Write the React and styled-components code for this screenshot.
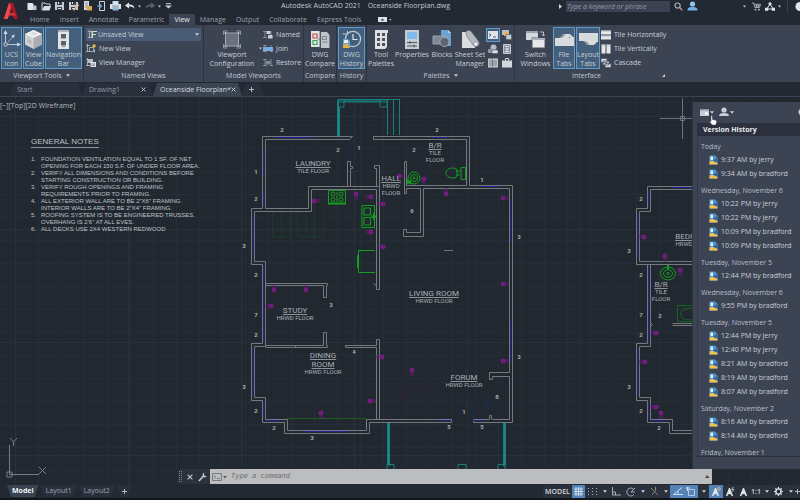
import React from "react";
import styled, { createGlobalStyle, css } from "styled-components";

const color = {
  frame: "#222932",
  ribbon: "#3c4454",
  divider: "#2d3441",
  canvas: "#212830",
  text: "#c9ced6",
  dim: "#9aa1ac",
  activeFill: "#435f7b",
  activeLine: "#5f9cc9",
};

const GlobalStyle = createGlobalStyle`
  * { box-sizing: border-box; }
  body { margin: 0; background: ${color.frame}; }
  button, input, select {
    font: inherit; color: inherit; background: none; border: 0; padding: 0; margin: 0;
    border-radius: 0; outline: none;
  }
  button { white-space: nowrap; }
  svg { display: block; flex: none; }
`;

const Shell = styled.div`
  height: 100vh;
  display: flex;
  flex-direction: column;
  overflow: hidden;
  font: 7px/10px "Open Sans", "Noto Sans", sans-serif;
  color: ${color.text};
  background: ${color.frame};
`;

/* ---------- header ---------- */
const Header = styled.header`
  display: grid;
  grid-template-columns: 25px minmax(0, 1fr);
  grid-template-rows: 14px 11px;
  flex: none;
`;
const LogoButton = styled.button`
  grid-row: 1 / 3;
  display: flex;
  padding: 2px 0 0 3px;
`;
const TitleBar = styled.div`
  display: flex;
  align-items: center;
  padding-bottom: 2px;
  min-width: 0;
`;
const QuickAccess = styled.div`
  display: flex;
  align-items: center;
  gap: 4px;
  padding-left: 2px;
  width: 147px;
  flex: none;
`;
const IconButton = styled.button`
  display: flex;
  align-items: center;
  justify-content: center;
  gap: ${(p) => p.$gap || 0}px;
  flex: none;
  color: #d5d9df;
`;
const Title = styled.div`
  flex: 1;
  display: flex;
  justify-content: center;
  gap: 7px;
  white-space: nowrap;
  color: #c3c8d0;
  line-height: 12px;
`;
const SearchArea = styled.div`
  display: flex;
  align-items: center;
  gap: 4px;
  width: 241px;
  flex: none;
`;
const SearchInput = styled.input`
  width: 104px;
  height: 11px;
  padding: 0 1px;
  background: #3b4252;
  font-style: italic;
  &::placeholder { color: #959cab; opacity: 1; }
`;
const Spacer = styled.span`
  flex: 1;
`;

const Menu = styled.nav`
  display: flex;
  color: ${color.dim};
`;
const MenuTab = styled.button`
  padding: 0 5px;
  line-height: 11px;
  ${(p) =>
    p.$active &&
    css`
      background: ${color.ribbon};
      color: #e3e6ea;
    `}
`;

/* ---------- ribbon ---------- */
const Ribbon = styled.section`
  display: flex;
  flex: none;
  height: 57px;
  background: ${color.ribbon};
`;
const Group = styled.section`
  display: flex;
  flex-direction: column;
  flex: none;
  width: ${(p) => p.$w}px;
  border-right: 1px solid ${(p) => (p.$last ? "transparent" : color.divider)};
`;
const GroupBody = styled.div`
  display: flex;
  gap: 1px;
  height: 44px;
  padding: ${(p) => p.$pad || "2px 1px 0"};
`;
const GroupLabel = styled.div`
  display: flex;
  align-items: center;
  justify-content: center;
  gap: 4px;
  height: 13px;
  line-height: 13px;
  white-space: nowrap;
  color: #c0c5ce;
`;
const LauncherLabel = styled(GroupLabel)`
  padding-right: 9px;
  text-align: center;
  span { flex: 1; }
`;
const BigButton = styled.button`
  width: ${(p) => p.$w}px;
  height: 42px;
  flex: none;
  display: flex;
  flex-direction: column;
  align-items: center;
  justify-content: flex-end;
  line-height: 9px;
  border: 1px solid transparent;
  ${(p) =>
    p.$active &&
    css`
      background: ${color.activeFill};
      border-color: ${color.activeLine};
    `}
`;
const BigIcon = styled.span`
  height: 21px;
  display: flex;
  align-items: center;
`;
const Stack = styled.div`
  display: flex;
  flex-direction: column;
  gap: 1px;
  padding-top: 1px;
`;
const SmallButton = styled.button`
  display: flex;
  align-items: center;
  gap: 3px;
  height: 13px;
  text-align: left;
`;
const ViewPicker = styled.label`
  display: flex;
  align-items: center;
  height: 13px;
  width: 115px;
  padding: 0 2px;
  background: #4a5b76;
`;
const ViewSelect = styled.select`
  flex: 1;
  appearance: none;
`;
const PaletteGrid = styled.div`
  display: grid;
  grid-template-columns: 14px 13px;
  grid-auto-rows: 14px;
  padding-top: 1px;
`;
const PaletteButton = styled(IconButton)`
  border: 1px solid ${(p) => (p.$active ? color.activeLine : "transparent")};
  background: ${(p) => (p.$active ? color.activeFill : "none")};
`;

/* ---------- file tabs ---------- */
const FileTabs = styled.div`
  display: flex;
  align-items: flex-end;
  height: 15px;
  flex: none;
  padding-left: 10px;
  border-bottom: 1px solid #3a4352;
`;
const FileTab = styled.div`
  display: flex;
  align-items: center;
  justify-content: space-between;
  width: ${(p) => p.$w}px;
  height: 13px;
  padding: 0 7px;
  white-space: nowrap;
  clip-path: polygon(4px 0, calc(100% - 4px) 0, 100% 100%, 0 100%);
  background: ${(p) => (p.$active ? "#3a4352" : "#29303b")};
  color: ${(p) => (p.$active ? "#d5d9df" : "#9198a3")};
`;

/* ---------- workspace ---------- */
const Workspace = styled.main`
  flex: 1;
  min-height: 0;
  display: grid;
  grid-template-columns: minmax(0, 1fr) 108px;
  grid-template-rows: minmax(0, 1fr) 15px 1px;
  background: ${color.canvas};
`;
const DrawingArea = styled.div`
  grid-area: 1 / 1 / -1 / -1;
  position: relative;
  overflow: hidden;
`;
const Plan = styled.svg`
  position: absolute;
  inset: 0;
  width: 100%;
  height: 100%;
  text { font-family: Roboto, sans-serif; text-anchor: middle; fill: #a9aeb5; }
`;
const ViewLabel = styled.div`
  position: relative;
  padding-top: 3px;
  line-height: 11px;
  color: #b5bac1;
`;
const Notes = styled.section`
  position: relative;
  padding-left: 31px;
  font-family: "Liberation Sans", Arial, sans-serif;
  font-size: 6px;
  line-height: 7px;
  color: #bfc3c9;
`;
const NotesTitle = styled.h2`
  width: fit-content;
  margin: 26px 0 8px;
  font-size: 8px;
  line-height: 10px;
  font-weight: 400;
  border-bottom: 1px solid #8d9298;
`;
const NotesList = styled.ol`
  margin: 0;
  padding: 0;
  list-style: none;
  white-space: pre;
  counter-reset: note;
  li {
    display: grid;
    grid-template-columns: 10px auto;
    counter-increment: note;
  }
  li::before { content: counter(note) "."; }
`;

/* ---------- version history ---------- */
const Panel = styled.aside`
  grid-area: 1 / 2;
  position: relative;
  z-index: 1;
  display: flex;
  flex-direction: column;
  margin-top: 5px;
  background: ${color.ribbon};
  border-left: 1px solid #2c333f;
  overflow: hidden;
`;
const PanelTools = styled.div`
  display: flex;
  align-items: center;
  gap: 5px;
  height: 21px;
  padding: 0 0 1px 7px;
`;
const PanelTitle = styled.h2`
  margin: 0 0 0 4px;
  padding-left: 6px;
  font-size: 7px;
  line-height: 13px;
  font-weight: 700;
  color: #e8eaee;
  background: #2c313d;
`;
const VersionList = styled.div`
  flex: 1;
  min-height: 0;
  overflow: hidden;
  margin: 0 0 12px 4px;
  padding: 4px 0 0 3px;
  border-left: 1px solid #31384a;
  border-bottom: 1px solid #2a303d;
`;
const VersionGroup = styled.section`
  margin-bottom: 3px;
`;
const VersionDate = styled.h3`
  margin: 0;
  font-size: 7px;
  font-weight: 400;
  line-height: 13px;
  color: #b9bfca;
  white-space: nowrap;
`;
const VersionItem = styled.button`
  display: flex;
  align-items: center;
  gap: 3px;
  height: 14px;
  padding-left: 8px;
`;
const Pointer = styled.svg`
  position: absolute;
  left: 16px;
  top: 13px;
`;

/* ---------- command line ---------- */
const CommandBar = styled.form`
  grid-area: 2 / 1 / 3 / -1;
  z-index: 2;
  display: flex;
  margin: 0 88px 0 178px;
  background: #2b323d;
`;
const CommandTools = styled.div`
  display: flex;
  align-items: center;
  justify-content: space-between;
  width: 32px;
  padding: 0 3px 0 1px;
`;
const CommandField = styled.label`
  flex: 1;
  display: flex;
  align-items: center;
  gap: 4px;
  padding: 0 2px;
  background: #bcbdbe;
  color: #555;
`;
const CommandInput = styled.input`
  flex: 1;
  min-width: 0;
  font: italic 7px/11px "DejaVu Sans Mono", "Liberation Mono", monospace;
  &::placeholder { color: #6b6c6e; opacity: 1; }
`;

/* ---------- status bar ---------- */
const StatusBar = styled.footer`
  display: flex;
  flex: none;
  height: 15px;
  border-bottom: 2px solid #12161c;
`;
const LayoutTabs = styled.div`
  display: flex;
  flex: 1;
  padding-left: 7px;
  gap: 2px;
`;
const LayoutTab = styled.button`
  height: 12px;
  padding: 0 5px;
  background: ${(p) => (p.$active ? "#3a4352" : "#29303b")};
  color: ${(p) => (p.$active ? "#f0f2f4" : "#9da4af")};
  font-weight: ${(p) => (p.$active ? 700 : 400)};
  clip-path: polygon(0 0, 100% 0, calc(100% - 4px) 100%, 4px 100%);
`;
const StatusTools = styled.div`
  display: flex;
  background: #2a313c;
`;
const StatusButton = styled.button`
  display: flex;
  align-items: center;
  justify-content: center;
  width: ${(p) => p.$w}px;
  height: 13px;
  font-weight: 600;
  color: #d3d7dd;
  background: ${(p) => (p.$on ? "#5583b8" : "none")};
`;

/* ---------- icons ---------- */
const Svg = ({ w, h, children, vb }) => (
  <svg width={w} height={h} viewBox={vb || `0 0 ${w} ${h}`} fill="none" aria-hidden="true">
    {children}
  </svg>
);
const Caret = ({ w = 5 }) => (
  <Svg w={w} h={3} vb="0 0 6 3.6">
    <path d="M0 0h6L3 3.6z" fill="#ccd1d8" />
  </Svg>
);
const Cross = ({ s = 5 }) => (
  <Svg w={s} h={s} vb="0 0 5 5">
    <path d="M.5.5l4 4M4.5.5l-4 4" stroke="#c5cad2" strokeWidth=".9" />
  </Svg>
);
const Plus = () => (
  <Svg w={5} h={5}>
    <path d="M2.5 0v5M0 2.5h5" stroke="#b4bac4" />
  </Svg>
);
const Logo = () => (
  <Svg w={16} h={18}>
    <path d="M6 1h4l5 16h-3.8l-1-3.8H6.5L4.6 17H.8z" fill="#c4202e" />
    <path d="M6 1L.8 17h3.8L8 5z" fill="#ef4a52" />
    <path d="M10 1l5 16h-3.8L7.5 3.5z" fill="#a81623" />
    <path d="M8.2 6.2l1.5 4.6H6.8z" fill="#222932" />
    <path d="M5.9 11.2h6l.8 2.2H5.2z" fill="#d73540" />
  </Svg>
);
const NewFile = () => (
  <Svg w={10} h={9}>
    <path d="M.5 1h5l1 1.5V8h-6z" fill="#e4e6e9" />
    <path d="M6.5 3l3 1v4h-4z" fill="#c2c6cc" />
  </Svg>
);
const OpenFile = () => (
  <Svg w={10} h={9}>
    <path d="M1 8V1h3l1 1h4v2" stroke="#cfd3d9" />
    <path d="M3 4h7L8.500 8.500H1z" fill="#d9dce1" />
  </Svg>
);
const SaveFile = ({ pen }) => (
  <Svg w={10} h={10}>
    <path d="M0 1h9v8H0z" fill="#c6cad0" />
    <path d="M2 1h5v3H2zM2 6h5v3H2z" fill="#39414e" />
    <path d="M3 7.500h3M3.500 1v2" stroke="#d8dbe0" />
    {pen && <path d="M4.500 9.200l5-5.400" stroke="#e5be8a" strokeWidth="1.600" />}
  </Svg>
);
const OpenWeb = () => (
  <Svg w={10} h={10}>
    <path d="M1 0h5v9H1z" fill="#d8dbdf" />
    <path d="M2 2h3M2 4h3M2 6h2" stroke="#69717e" strokeWidth=".7" />
    <path d="M3.500 5H9v4.500H3.500z" fill="#d9a655" />
  </Svg>
);
const SaveWeb = () => (
  <Svg w={9} h={10}>
    <path d="M2.500.500h5v9h-5z" stroke="#cdd1d7" />
    <path d="M0 5h4M2.600 3l2 2-2 2" stroke="#5aa5dc" strokeWidth="1.200" />
  </Svg>
);
const Print = () => (
  <Svg w={11} h={10}>
    <path d="M2.500 0h6v3h-6z" fill="#cfe2f2" />
    <path d="M0 3h11v5H0z" fill="#dfe2e6" />
    <path d="M2.500 6h6v3.500h-6z" fill="#8db8da" />
    <path d="M2 5h7" stroke="#606975" strokeWidth=".7" />
  </Svg>
);
const Undo = ({ dim }) => (
  <Svg w={10} h={8}>
    <g transform={dim ? "matrix(-1 0 0 1 10 0)" : undefined}>
      <path d="M0 3.500L4 .500v2c3.400 0 5.400 1.200 5.600 4.600C8.300 5.200 6.500 4.600 4 4.600v2z" fill={dim ? "#5a6371" : "#e0e3e7"} />
    </g>
  </Svg>
);
const MoreTools = () => (
  <Svg w={7} h={6}>
    <path d="M1 .7h5" stroke="#ccd1d8" />
    <path d="M0 2.400h7L3.500 5.500z" fill="#ccd1d8" />
  </Svg>
);
const SearchIcon = () => (
  <Svg w={9} h={9}>
    <circle cx="3.600" cy="3.600" r="2.600" stroke="#a9afb9" strokeWidth="1.200" />
    <path d="M5.600 5.600l2.700 2.700" stroke="#c4927a" strokeWidth="1.400" />
  </Svg>
);
const UserIcon = () => (
  <Svg w={11} h={10}>
    <circle cx="5.500" cy="3" r="2.600" fill="#8cc4ee" />
    <path d="M.5 9.500c0-3 2-3.500 5-3.500s5 .5 5 3.500z" fill="#6fb0e2" />
  </Svg>
);
const Cart = () => (
  <Svg w={9} h={9}>
    <path d="M0 1h1.700l1.200 4.600h4.600l1-3.300H2.200M3.200 4h5M4.600 2.500v3M6.300 2.500v3" stroke="#b9bfc8" strokeWidth=".8" />
    <circle cx="3.500" cy="7.700" r=".9" fill="#b9bfc8" />
    <circle cx="7" cy="7.700" r=".9" fill="#b9bfc8" />
  </Svg>
);
const Share = () => (
  <Svg w={10} h={9}>
    <path d="M5 2L1.800 7M5 2l3.200 5M3 7h4" stroke="#e0e3e7" strokeWidth="1" />
    <circle cx="5" cy="1.800" r="1.600" fill="#e0e3e7" />
    <path d="M0 5.800h3.200v3H0zM6.800 5.800H10v3H6.800z" fill="#e0e3e7" />
  </Svg>
);
const Ucs = () => (
  <Svg w={19} h={19}>
    <path d="M3.500 2v12.500H16" stroke="#b9c3ce" />
    <path d="M4 14L11 7" stroke="#b9c3ce" strokeDasharray="2 1" />
    <path d="M1.500 4l2-4 2 4zM15 12.500l4 2-4 2zM9 6l4-1.500L11.500 8z" fill="#d5dbe2" />
    <path d="M2 13h3v3H2z" fill="#435f7b" stroke="#c5ccd5" strokeWidth=".8" />
  </Svg>
);
const Cube = () => (
  <Svg w={17} h={19}>
    <path d="M8.500 0L17 4v10.500L8.500 19 0 14.500V4z" fill="#cfd1d3" />
    <path d="M8.500 0L17 4 8.500 8 0 4z" fill="#efefef" />
    <path d="M8.500 8L17 4v10.500L8.500 19z" fill="#a9acb0" />
    <path d="M2.500 8.500l4 2v3.500l-4-2z" fill="#b7babd" />
    <path d="M4.500 3.800l4-2 4 2-4 2z" fill="#d9dadb" />
  </Svg>
);
const NavBarIcon = () => (
  <Svg w={11} h={19}>
    <path d="M0 0h11v19H0z" fill="#e2e3e4" />
    <path d="M0 0h11v2H0z" fill="#aeb3b9" />
    <path d="M3 4h5v4.500H3zM3 11h5v4.500H3z" fill="#59616c" />
    <path d="M4 16.700h3" stroke="#8b9199" />
  </Svg>
);
const ViewGlyph = ({ kind }) => (
  <Svg w={10} h={9}>
    <path d="M1.500 0v8M0 1.500h4M0 7.500h4" stroke="#a9b1bd" strokeWidth=".9" />
    {kind === "pick" && <path d="M3.500 8V1H9v1H5v2h3v1H5v3z" fill="#e3d9b7" />}
    {kind === "new" && (
      <>
        <path d="M3.500 3.500h4v4h-4z" stroke="#aab2bd" strokeWidth=".9" />
        <circle cx="8" cy="2" r="1.700" fill="#e7b94f" />
        <path d="M8.500 5.500v3" stroke="#b4bbc6" />
      </>
    )}
    {kind === "manage" && (
      <>
        <path d="M2 1h5v4H2z" fill="#b9bfc8" />
        <path d="M4.500 4H10v5H4.500z" fill="#dfe2e6" />
        <path d="M5.500 6h3.500M5.500 7.500h3.500" stroke="#626b79" strokeWidth=".7" />
      </>
    )}
  </Svg>
);
const Viewport = () => (
  <Svg w={18} h={19}>
    <path d="M2.500 3h13v13h-13z" fill="#6a717d" stroke="#a3a9b2" />
    <path d="M.5 5V1h4M13.500 1h4v4M17.500 14v4h-4M4.500 18h-4v-4" stroke="#9097a2" />
    <path d="M1.500 2h2v2h-2zM14.500 2h2v2h-2zM1.500 15h2v2h-2zM14.500 15h2v2h-2z" fill="#aeb4bd" />
  </Svg>
);
const PortGlyph = ({ kind }) => (
  <Svg w={10} h={9}>
    <path d="M2 1v7M0 1.500h4M0 7.500h4M8 1v7M7 7.500h3" stroke="#9199a6" strokeWidth=".8" />
    {kind === 0 && <path d="M3.500 1h4v3h-4zM5 5h4.500v3.500H5z" fill="#ced2d8" />}
    {kind === 1 && <path d="M0 3h10v4H0z" fill="#77addb" />}
    {kind === 2 && <path d="M3 3h4.500v3.500H3z" fill="#818a98" />}
  </Svg>
);
const Compare = () => (
  <Svg w={20} h={18}>
    <path d="M1 0h9v16H1z" fill="#e3e4e5" />
    <path d="M11 1h6l2.500 3v13H11z" fill="#c0c3c7" />
    <path d="M3 3h4v4H3z" stroke="#d3484d" strokeWidth="1.200" />
    <path d="M3 9.500h4v4H3z" stroke="#3da65a" strokeWidth="1.200" />
    <path d="M10 0v17.500" stroke="#5f6672" />
    <path d="M12.500 5.500h4v3h-4zM12.500 11h5" stroke="#7e858f" />
    <path d="M7.500 8h5" stroke="#7e858f" />
  </Svg>
);
const History = () => (
  <Svg w={20} h={19}>
    <circle cx="11" cy="9" r="7.600" stroke="#bfcbd7" strokeWidth="1.300" />
    <path d="M11 4v5.500h4.500" stroke="#dfe5eb" strokeWidth="1.200" />
    <path d="M.5 4h5v-3" stroke="#bfcbd7" />
    <path d="M1 9h5l2 2v7H1z" fill="#6ba4d4" />
    <path d="M2 10h4v3H2z" fill="#e8eaec" />
    <path d="M1 15l4-1.500L8 18H1z" fill="#e5b23c" />
  </Svg>
);
const ToolPal = () => (
  <Svg w={15} h={19}>
    <path d="M1 0h13v3h-1v14l-2 2H1z" fill="#dfe0e1" />
    <path d="M3 3h3v3H3zM8 3h3v3H8zM3 8h3v3H3zM8 8h3v3H8zM3 13h3v3H3zM8 13h3v3H8z" fill="#4c535f" />
  </Svg>
);
const Props = () => (
  <Svg w={14} h={19}>
    <path d="M0 0h14v19H0z" fill="#c8cbcf" />
    <path d="M2 2h10v7H2z" fill="#7fbceb" />
    <path d="M2 12.500h10M2 16h10M5 11v3M9 14.500v3" stroke="#505865" />
  </Svg>
);
const Blocks = () => (
  <Svg w={20} h={19}>
    <path d="M9 0h7l3 3v13H9z" fill="#6aa3d2" />
    <path d="M16 0v3h3z" fill="#b8d8f0" />
    <path d="M1 6h11v8H1z" fill="#808792" stroke="#9da3ad" />
    <circle cx="12.500" cy="12" r="4.600" fill="#5d6572" stroke="#a1a7b1" />
  </Svg>
);
const SheetSet = () => (
  <Svg w={19} h={19}>
    <path d="M1 2h4l9 12v4H1z" fill="#d9dbdd" />
    <path d="M5 2c1-2 4-2 5.500 0l7.500 10c1 4-3 6-5.500 3.500L5.500 6z" fill="#b4b8bd" stroke="#737a85" strokeWidth=".7" />
    <circle cx="14.800" cy="14" r="2.300" fill="#eef0f1" stroke="#777e88" strokeWidth=".7" />
  </Svg>
);
const Pal = ({ kind }) => (
  <Svg w={10} h={10}>
    {kind === 0 && (
      <>
        <path d="M0 1h10v8H0z" fill="#dfe3e7" />
        <path d="M1 3.500l2 1.500-2 1.500M5 7h3" stroke="#38414d" strokeWidth=".8" />
      </>
    )}
    {kind === 1 && (
      <>
        <path d="M0 0h7v5H0z" fill="#b9bfc8" />
        <path d="M2 2h5v4H2z" fill="#e0b35c" />
        <path d="M4 4.500h5.500v5H4z" fill="#c7cbd2" stroke="#545d6b" strokeWidth=".6" />
      </>
    )}
    {kind === 2 && (
      <>
        <circle cx="5.500" cy="3.500" r="3" fill="#b5bac3" />
        <path d="M0 5h6v4H0z" fill="#8d95a1" />
        <path d="M4 6h6v3.500H4z" fill="#dcdfe3" stroke="#525b69" strokeWidth=".6" />
      </>
    )}
    {kind === 3 && (
      <>
        <path d="M1.500.5h7v9h-7z" fill="#8c939e" stroke="#c6cad1" />
        <path d="M3 2.500h4M3 5h4M3 7.500h4M5 4v4.500" stroke="#dde0e4" strokeWidth=".9" />
      </>
    )}
    {kind === 4 && (
      <>
        <path d="M0 .5h10v9H0z" fill="#c4c8ce" />
        <path d="M1 3h8M1 5h8M1 7h8M4.500 1v8" stroke="#646c79" strokeWidth=".8" />
      </>
    )}
    {kind === 5 && (
      <>
        <path d="M0 2.500h10v7H0z" fill="#d3d6da" />
        <path d="M3.500 2.500v-2h3v2" stroke="#d3d6da" />
      </>
    )}
  </Svg>
);
const Switch = () => (
  <Svg w={20} h={19}>
    <path d="M0 1h12v9H0z" fill="#d5d8dc" />
    <path d="M0 1h12v2H0z" fill="#9ca2ac" />
    <path d="M6 8h13v10H6z" fill="#e7e8e9" stroke="#4a5260" />
    <path d="M6 8h13v2H6z" fill="#aab0b8" />
    <path d="M14 2h3.500v4M16 4.500l1.500 1.500L19 4.500" stroke="#bcc1c9" />
  </Svg>
);
const FileTabIcon = ({ flip }) => (
  <Svg w={19} h={13}>
    <g transform={flip ? "matrix(1 0 0 -1 0 13)" : undefined}>
      <path d="M0 5h5l3-4h7l3 3h1v9H0z" fill="#d8dadc" />
      <path d="M3 5c3 0 4-4 7-4-1 3-3 4-7 4z" fill="#7f8791" />
    </g>
    {!flip && <circle cx="14.500" cy="4.500" r=".8" fill="#7f8791" />}
  </Svg>
);
const TileIcon = ({ kind }) => (
  <Svg w={10} h={10}>
    {kind === 0 && <path d="M0 .5h10v4H0zM0 5.500h10v4H0z" fill="#e6e8ea" />}
    {kind === 1 && <path d="M.5.5h4v9h-4zM5.500.5h4v9h-4z" fill="#e6e8ea" />}
    {kind === 2 && (
      <g fill="#dadde1" stroke="#444d5b" strokeWidth=".7">
        <path d="M0 .5h6v4H0zM2 3h6v4H2zM4 5.500h6v4H4z" />
      </g>
    )}
    {kind < 2 && <path d={kind ? "M.5 1h4M5.500 1h4" : "M0 1h10M0 6h10"} stroke="#a3aab5" strokeWidth=".8" />}
  </Svg>
);
const VersionIcon = () => (
  <Svg w={9} h={10}>
    <path d="M.5.5H6l2.500 2.500v6.500h-8z" fill="#4f93cf" />
    <path d="M1.500 1.500H4V5H1.500z" fill="#e6edf2" />
    <path d="M4 5.500L8 3v4H4z" fill="#2d68a6" />
    <path d="M.5 6.500l3-.8 5 2.300v1.500h-8z" fill="#f0c14c" />
  </Svg>
);
const Wrench = () => (
  <Svg w={9} h={10}>
    <path d="M.9 8.900l4.600-4.800" stroke="#c9ced6" strokeWidth="1.500" />
    <path d="M6.300.8C4.600 1.300 4.200 3 4.800 4.300s2.500 1.700 3.900-.3L7 4 5.900 2.900z" fill="#c9ced6" />
  </Svg>
);
const Gear = () => (
  <Svg w={9} h={9}>
    <circle cx="4.500" cy="4.500" r="2.600" stroke="#e1e4e8" strokeWidth="1.400" />
    <path d="M4.500 0v2M4.500 7v2M0 4.500h2M7 4.500h2M1.300 1.300l1.400 1.400M6.300 6.300l1.400 1.400M7.700 1.300L6.300 2.700M2.700 6.300L1.300 7.700" stroke="#e1e4e8" strokeWidth="1.200" />
  </Svg>
);
const ScaleMark = ({ badge }) => (
  <Svg w={10} h={10}>
    <path d="M4 1L.8 9h1.400L4.500 6l2.300 3h1.400L5 1z" fill="#dfe4ea" />
    <path d="M4.500 2v5" stroke="#dfe4ea" strokeWidth="1.300" />
    {badge === "eye" && <circle cx="8" cy="2" r="1.400" stroke="#e8c884" strokeWidth=".8" />}
    {badge === "bolt" && <path d="M8.300 0L6.800 2.400h2L7.500 4.500" stroke="#e0e3e7" strokeWidth=".8" />}
  </Svg>
);

/* ---------- floor plan ---------- */
const WALLS = [
  "M349 136H262V208H251V264H262V343H251V400H262V422H284V433H369V422H451V419H366V430H287V419H265V397H254V346H265V261H254V211H311V189H376V289H379V186H308V208H265V139H349L352 136Z",
  "M489 419H473V422H512V185H469V136H373V139H466V185H406V161H404V193H406V188H420V232H406V229H403V236H423V188H509V372H489V379H492V376H509V419H492",
  "M347 186V161H350V166H352V168H350V186M379 186V165H374V168H376V186",
  "M265 283H327V285H326V297H323V285H265M265 345H323V332H326V345H327V347H265M345 345H376V339H379V419M345 347H376V419M345 345V347M295 345V347M373 283L376 285",
  "M489 419V415H491V419",
];
const EAST_WALLS = [
  "M692 186H647V208H636V264H692M692 189H650V211H639V261H692",
  "M647 264V343H636V400H647V422H669V433H692M650 264V346H639V397H650V419H672V430H692M650 322L652 324L650 326M672 323H692M672 325H692",
];
const WINDOWS =
  "M275 137.500H312M263.500 150V176M263.500 190V206M252.500 216V255M263.500 265V342M252.500 348V396M263.500 402V418M264 420.500H280M305 431.500H349M432 137.500H447M482 186.500H499M510.500 199V242M510.500 320V362M440 420.500H451M473 420.500H484M672 187.500H692M648.500 190V206M637.500 214V258M648.500 266V342M637.500 348V396M648.500 402V418M650 420.500H665";
const TEAL =
  "M338 99.500H400M338 102H386M337.500 100V136M339.500 107V136M387.500 100V135M393.500 100V135M399.500 100V135M338 100H344V107H338ZM380 100H387V107H380ZM387.500 422V466M389.500 422V466M503.500 422V466M505.500 422V466M387 464.500H394V471H387ZM458 464.500H466V471H458ZM498 464.500H505V471H498Z";
const OUTLETS = [
  [314, 201, 0], [356, 194, 90], [371, 197, 180], [371, 232, 180], [383, 204, 180], [383, 247, 180],
  [399, 176, 0], [424, 179, 90], [446, 194, 270], [503, 198, 0], [274, 290, 270], [306, 290, 270],
  [271, 306, 180], [382, 357, 180], [370, 401, 0], [321, 413, 90], [412, 370, 90], [503, 284, 0],
  [503, 361, 0], [644, 237, 180], [665, 256, 90], [680, 270, 90], [656, 333, 180], [645, 362, 180],
  [656, 407, 180], [661, 413, 90],
];
const MARKS = [
  [282, 130, 2], [256, 172, 1], [256, 199, 2], [244, 246, 3], [256, 275, 2], [256, 315, 7], [256, 335, 2],
  [338, 150, 2], [359, 148, 1], [437, 130, 2], [414, 150, 2], [412, 211, 6], [482, 180, 1], [519, 237, 3],
  [331, 305, 3], [354, 352, 4], [244, 387, 3], [256, 411, 2], [274, 428, 2], [312, 438, 3], [519, 357, 3],
  [497, 397, 8], [464, 412, 1], [449, 427, 5], [482, 427, 5], [641, 199, 2], [629, 251, 3], [641, 275, 2],
  [641, 315, 7], [660, 316, 2], [641, 335, 2], [629, 387, 3], [641, 411, 2], [659, 428, 2],
];
const ROOMS = [
  [313, 166, ["LAUNDRY"], ["TILE FLOOR"]],
  [391, 181, ["HALL"], ["HRWD", "FLOOR"]],
  [435, 148, ["B/R"], ["TILE", "FLOOR"]],
  [434, 296, ["LIVING ROOM"], ["HRWD FLOOR"]],
  [295, 313, ["STUDY"], ["HRWD FLOOR"]],
  [323, 358, ["DINING", "ROOM"], ["HRWD FLOOR"]],
  [464, 380, ["FORUM"], ["HRWD FLOOR"]],
  [661, 287, ["B/R"], ["TILE", "FLOOR"]],
  [694, 239, ["BEDROOM"], ["HRWD FLOOR"]],
];

const Outlet = ({ at: [x, y, r] }) => (
  <g transform={`translate(${x} ${y}) rotate(${r})`}>
    <circle r="2" fill="#6d1a78" stroke="#842090" strokeWidth=".8" />
    <path d="M2 -1H6M2 1H6" stroke="#6d1c78" strokeWidth=".8" />
  </g>
);
const Room = ({ x, y, name, floor }) => (
  <>
    {name.map((line, i) => (
      <text key={line} x={x} y={y + i * 9} fontSize="8" textDecoration="underline">{line}</text>
    ))}
    {floor.map((line, i) => (
      <text key={line} x={x} y={y + name.length * 9 - 2 + i * 7} fontSize="6">{line}</text>
    ))}
  </>
);

function FloorPlan() {
  return (
    <Plan role="img" aria-label="Oceanside floor plan">
      <defs>
        <pattern id="fine" width="23" height="23" patternUnits="userSpaceOnUse" x="15" y="5">
          <path d="M.5 0V23M0 .5H23" stroke="#252d36" />
        </pattern>
        <pattern id="coarse" width="113" height="113" patternUnits="userSpaceOnUse" x="15" y="19">
          <path d="M.5 0V113M0 .5H113" stroke="#29323c" />
        </pattern>
      </defs>
      <rect width="100%" height="100%" fill="url(#fine)" />
      <rect width="100%" height="100%" fill="url(#coarse)" />
      <g transform="translate(0 -97)" fill="none">
        <path d={TEAL} stroke="#197f7c" />
        <path d="M338.500 102V136M388.500 423V465M504.500 423V465M344 101H380" stroke="#1c8c87" />
        <path d="M272.500 211V237H290.500V211M297.500 211V237H323.500V211M306.500 211V237M314.500 211V237M281.500 211V237" stroke="#1b3c25" />
        <path d="M287 418.500H366" stroke="#1d5a22" />
        <path d="M403 396L412 384H436M401 400V376H418V396H401M398 388H440" stroke="#371f47" strokeDasharray="3 2" />
        <path d="M350 140V161M472 402V416M485 414V398L489 410" stroke="#1b2f52" />
        <path d="M352 301Q335 320 326 332M420 210Q410 218 404 228" stroke="#22303c" />
        {[...WALLS, ...EAST_WALLS].map((d) => (
          <path key={d} d={d} stroke="#74797f" transform="translate(.5 .5)" />
        ))}
        <path d={WINDOWS} stroke="#222296" />
        <g stroke="#12a01c">
          <path d="M328.500 190.500H345.500V203.500H328.500Z" />
          <path d="M328 203.500H346" strokeWidth="2" />
          <circle cx="333" cy="194" r="2" />
          <circle cx="341" cy="194" r="2" />
          <circle cx="333" cy="199.500" r="2" />
          <circle cx="341" cy="199.500" r="2" />
          <path d="M337 192V202" />
          <path d="M362 205.500H374.500V227.500H362ZM364 208H370.500V215H364ZM364 217.500H370.500V225H364Z" />
          <path d="M371 216.500H376M374 213V220" strokeWidth="2" />
          <path d="M375 250.500H358.500V272.500H375M357.500 255V268" />
          <circle cx="414" cy="178" r="6" />
          <circle cx="414" cy="178" r="3.500" />
          <circle cx="414" cy="178" r="1" />
          <path d="M407 180L411 184M407 183L411 181" strokeWidth="2" />
          <path d="M456 168.500C450 167 446 169.500 446 173S450 179 456 177.500Q459 173 456 168.500ZM456 171H460M456 175H460M461 167.500H465.500V179.500H461Z" />
          <ellipse cx="668" cy="273.500" rx="7.500" ry="6.500" />
          <ellipse cx="668" cy="273.500" rx="4.500" ry="3.800" />
          <circle cx="668" cy="273.500" r="1" />
          <path d="M668 265V269" strokeWidth="2" />
          <path d="M692 305.500H677.500V321.500H692M692 308Q681 308 680.500 314T692 320" stroke="#176322" />
        </g>
        {OUTLETS.map((at) => (
          <Outlet key={at.join()} at={at} />
        ))}
        <path d="M444 250.500H453" stroke="#6f757c" />
        <path d="M660 118.500H704M682.500 98V139M680.500 116.500H684.500V120.500H680.500Z" stroke="#6e747b" />
        <path d="M9.500 445V474.500H39M7 472H12V477H7ZM10 438L13.500 442L17 438M13.500 442V446M39 467L46 474M46 467L39 474" stroke="#777d84" />
        {ROOMS.map(([x, y, name, floor]) => (
          <Room key={`${x}-${y}`} x={x} y={y} name={name} floor={floor} />
        ))}
        <g fontSize="6" fontWeight="700">
          {MARKS.map(([x, y, n]) => (
            <text key={`${x}-${y}`} x={x} y={y + 2}>{n}</text>
          ))}
        </g>
      </g>
    </Plan>
  );
}

const NOTES = [
  "FOUNDATION VENTILATION EQUAL TO 1 SF. OF NET\nOPENING FOR EACH 150 S.F. OF UNDER FLOOR AREA.",
  "VERIFY ALL DIMENSIONS AND CONDITIONS BEFORE\nSTARTING CONSTRUCTION OR BUILDING.",
  "VERIFY ROUGH OPENINGS AND FRAMING\nREQUIREMENTS PRIOR TO FRAMING.",
  "ALL EXTERIOR WALL ARE TO BE 2\"X6\" FRAMING.\nINTERIOR WALLS ARE TO BE 2\"X4\" FRAMING.",
  "ROOFING SYSTEM IS TO BE ENGINEERED TRUSSES.\nOVERHANG IS 2'6\" AT ALL EVES.",
  "ALL DECKS USE 2X4 WESTERN REDWOOD",
];
const VERSIONS = [
  ["Today", ["9:37 AM by jerry", "9:34 AM by bradford"]],
  ["Wednesday, November 6", ["10:22 PM by jerry", "10:22 PM by jerry", "10:09 PM by bradford", "10:09 PM by bradford"]],
  ["Tuesday, November 5", ["12:44 PM by bradford"]],
  ["Wednesday, November 6", ["9:55 PM by bradford"]],
  ["Tuesday, November 5", ["12:44 PM by jerry", "12:40 PM by jerry", "8:21 AM by bradford", "8:19 AM by bradford", "8:07 AM by bradford"]],
  ["Saturday, November 2", ["8:16 AM by bradford", "8:14 AM by bradford"]],
  ["Friday, November 1", []],
];
const MENU = ["Home", "Insert", "Annotate", "Parametric", "View", "Manage", "Output", "Collaborate", "Express Tools"];

const Big = ({ w, active, icon, lines }) => (
  <BigButton $w={w} $active={active}>
    <BigIcon>{icon}</BigIcon>
    {lines.map((l) => (
      <span key={l}>{l}</span>
    ))}
  </BigButton>
);

export default function App() {
  return (
    <Shell>
      <GlobalStyle />
      <Header>
        <LogoButton aria-label="Application menu"><Logo /></LogoButton>
        <TitleBar>
          <QuickAccess>
            <IconButton aria-label="New"><NewFile /></IconButton>
            <IconButton aria-label="Open"><OpenFile /></IconButton>
            <IconButton aria-label="Save"><SaveFile /></IconButton>
            <IconButton aria-label="Save as"><SaveFile pen /></IconButton>
            <IconButton aria-label="Open from web"><OpenWeb /></IconButton>
            <IconButton aria-label="Save to web"><SaveWeb /></IconButton>
            <IconButton aria-label="Plot"><Print /></IconButton>
            <IconButton aria-label="Undo" $gap={3}><Undo /><Caret w={3} /></IconButton>
            <IconButton aria-label="Redo" $gap={3}><Undo dim /><Caret w={3} /></IconButton>
            <IconButton aria-label="Customize"><MoreTools /></IconButton>
          </QuickAccess>
          <Title>
            <span>Autodesk AutoCAD 2021</span>
            <span>Oceanside Floorplan.dwg</span>
          </Title>
          <SearchArea>
            <Svg w={3} h={5}><path d="M0 0l3 2.500L0 5z" fill="#d5d9df" /></Svg>
            <SearchInput aria-label="Search" placeholder="Type a keyword or phrase" />
            <IconButton aria-label="Search"><SearchIcon /></IconButton>
            <IconButton aria-label="Account"><UserIcon /></IconButton>
            <Spacer />
            <IconButton aria-label="App store" $gap={6}><Caret w={3} /><Cart /></IconButton>
            <IconButton aria-label="Stay connected" $gap={3}><Share /><Caret w={3} /></IconButton>
            <Svg w={15} h={11}>
              <path d="M2.500 0V11" stroke="#3a4250" />
              <circle cx="15" cy="5.500" r="4.500" fill="#e4e6e9" />
            </Svg>
          </SearchArea>
        </TitleBar>
        <Menu>
          {MENU.map((m) => (
            <MenuTab key={m} $active={m === "View"}>{m}</MenuTab>
          ))}
          <IconButton aria-label="Ribbon display">
            <Svg w={26} h={6}>
              <path d="M12 0h9v5h-9z" fill="#dfe2e6" />
              <path d="M14.500 3.500h4l-2-2z" fill="#39414e" />
              <path d="M23 2h2.500L24.200 3.500z" fill="#ccd1d8" />
            </Svg>
          </IconButton>
        </Menu>
      </Header>

      <Ribbon>
        <Group $w={84}>
          <GroupBody>
            <Big w={21} active icon={<Ucs />} lines={["UCS", "Icon"]} />
            <Big w={21} active icon={<Cube />} lines={["View", "Cube"]} />
            <Big w={37} active icon={<NavBarIcon />} lines={["Navigation", "Bar"]} />
          </GroupBody>
          <GroupLabel>Viewport Tools <Caret w={4} /></GroupLabel>
        </Group>
        <Group $w={120}>
          <GroupBody $pad="2px 2px 0">
            <Stack>
              <ViewPicker>
                <ViewGlyph kind="pick" />
                <ViewSelect aria-label="Named view"><option>Unsaved View</option></ViewSelect>
                <Caret w={4} />
              </ViewPicker>
              <SmallButton><ViewGlyph kind="new" />New View</SmallButton>
              <SmallButton><ViewGlyph kind="manage" />View Manager</SmallButton>
            </Stack>
          </GroupBody>
          <GroupLabel>Named Views</GroupLabel>
        </Group>
        <Group $w={100}>
          <GroupBody $pad="2px 2px 0">
            <Big w={52} icon={<Viewport />} lines={["Viewport", "Configuration"]} />
            <IconButton aria-label="Viewport configurations"><Caret w={3} /></IconButton>
            <Stack>
              {["Named", "Join", "Restore"].map((t, i) => (
                <SmallButton key={t}><PortGlyph kind={i} />{t}</SmallButton>
              ))}
            </Stack>
          </GroupBody>
          <GroupLabel>Model Viewports</GroupLabel>
        </Group>
        <Group $w={33}>
          <GroupBody><Big w={30} icon={<Compare />} lines={["DWG", "Compare"]} /></GroupBody>
          <GroupLabel>Compare</GroupLabel>
        </Group>
        <Group $w={30}>
          <GroupBody><Big w={27} active icon={<History />} lines={["DWG", "History"]} /></GroupBody>
          <GroupLabel>History</GroupLabel>
        </Group>
        <Group $w={148}>
          <GroupBody>
            <Big w={26} icon={<ToolPal />} lines={["Tool", "Palettes"]} />
            <Big w={34} icon={<Props />} lines={["Properties", "\u00a0"]} />
            <Big w={24} icon={<Blocks />} lines={["Blocks", "\u00a0"]} />
            <Big w={30} icon={<SheetSet />} lines={["Sheet Set", "Manager"]} />
            <PaletteGrid>
              {["Command line", "External references", "Layers", "Calculator", "Markup", "Toolbox"].map((t, i) => (
                <PaletteButton key={t} aria-label={t} $active={i === 0}><Pal kind={i} /></PaletteButton>
              ))}
            </PaletteGrid>
          </GroupBody>
          <GroupLabel>Palettes <Caret w={4} /></GroupLabel>
        </Group>
        <Group $w={160} $last>
          <GroupBody $pad="2px 4px 0">
            <Big w={33} icon={<Switch />} lines={["Switch", "Windows"]} />
            <Big w={22} active icon={<FileTabIcon />} lines={["File", "Tabs"]} />
            <Big w={24} active icon={<FileTabIcon flip />} lines={["Layout", "Tabs"]} />
            <Stack>
              {["Tile Horizontally", "Tile Vertically", "Cascade"].map((t, i) => (
                <SmallButton key={t}><TileIcon kind={i} />{t}</SmallButton>
              ))}
            </Stack>
          </GroupBody>
          <LauncherLabel>
            <span>Interface</span>
            <IconButton aria-label="Interface options">
              <Svg w={3} h={3}><path d="M3 0v3H0z" fill="#ccd1d8" /></Svg>
            </IconButton>
          </LauncherLabel>
        </Group>
      </Ribbon>

      <FileTabs>
        <FileTab $w={72}>Start</FileTab>
        <FileTab $w={71}>Drawing1 <IconButton aria-label="Close Drawing1"><Cross /></IconButton></FileTab>
        <FileTab $w={89} $active>
          Oceanside Floorplan* <IconButton aria-label="Close Oceanside Floorplan"><Cross /></IconButton>
        </FileTab>
        <FileTab as="button" aria-label="New drawing" $w={22}><Plus /></FileTab>
      </FileTabs>

      <Workspace>
        <DrawingArea>
          <FloorPlan />
          <ViewLabel>[−][Top][2D Wireframe]</ViewLabel>
          <Notes>
            <NotesTitle>GENERAL NOTES</NotesTitle>
            <NotesList>
              {NOTES.map((n) => (
                <li key={n}>{n}</li>
              ))}
            </NotesList>
          </Notes>
        </DrawingArea>

        <Panel>
          <PanelTools>
            <IconButton aria-label="Filter by date" $gap={1}>
              <Svg w={9} h={9}>
                <path d="M0 1h9v7H0z" fill="#c9cdd3" />
                <path d="M0 1h9v1.500H0z" fill="#8d949f" />
                <path d="M5 4h3v3H5z" fill="#eceef0" />
              </Svg>
              <Caret w={4} />
            </IconButton>
            <IconButton aria-label="Filter by user">
              <Svg w={11} h={10}>
                <circle cx="5" cy="3" r="2.600" fill="#c9cdd3" />
                <path d="M0 9c0-2 1.500-3 5-3s5 1 5 3z" fill="#c9cdd3" />
              </Svg>
              <Caret w={4} />
            </IconButton>
            <Spacer />
            <Svg w={2} h={8}><circle cx="4" cy="4" r="3.500" fill="#c9cdd3" /></Svg>
          </PanelTools>
          <PanelTitle>Version History</PanelTitle>
          <VersionList>
            {VERSIONS.map(([date, items], g) => (
              <VersionGroup key={g}>
                <VersionDate>{date}</VersionDate>
                {items.map((t, i) => (
                  <VersionItem key={i}><VersionIcon />{t}</VersionItem>
                ))}
              </VersionGroup>
            ))}
          </VersionList>
          <Pointer width="8" height="11" viewBox="0 0 8 11" aria-hidden="true">
            <path d="M2 1q.8-1 1.500 0v3.500l3.500.8q.8.3.6 1.500L7 10H3L.5 6.500q.5-1 1.500 0z" fill="#fff" stroke="#333a46" strokeWidth=".5" />
          </Pointer>
        </Panel>

        <CommandBar onSubmit={(e) => e.preventDefault()}>
          <CommandTools>
            <Svg w={3} h={11}>
              <path d="M.5 0V11M2.500 0V11" stroke="#7b828d" strokeDasharray="1 1" />
            </Svg>
            <IconButton type="button" aria-label="Close command line"><Cross s={6} /></IconButton>
            <IconButton type="button" aria-label="Customize"><Wrench /></IconButton>
          </CommandTools>
          <CommandField>
            <Svg w={15} h={8}>
              <path d="M.5.5h9v7h-9z" stroke="#77797c" />
              <path d="M2 2.500l1.500 1.300L2 5.200M5 5.500h3" stroke="#66686b" strokeWidth=".8" />
              <path d="M11 3h4l-2 2.500z" fill="#555" />
            </Svg>
            <CommandInput aria-label="Command" placeholder="Type a command" />
            <Svg w={5} h={3}><path d="M0 3h4.500L2.200 0z" fill="#4a4a4a" /></Svg>
          </CommandField>
        </CommandBar>
      </Workspace>

      <StatusBar>
        <LayoutTabs>
          <LayoutTab $active>Model</LayoutTab>
          <LayoutTab>Layout1</LayoutTab>
          <LayoutTab>Layout2</LayoutTab>
          <LayoutTab aria-label="New layout"><Plus /></LayoutTab>
        </LayoutTabs>
        <StatusTools>
          <StatusButton $w={29}>MODEL</StatusButton>
          <StatusButton $w={13} $on aria-label="Grid">
            <Svg w={9} h={9}><path d="M2 0v9M4.500 0v9M7 0v9M0 2h9M0 4.500h9M0 7h9" stroke="#e6ecf3" strokeWidth=".8" /></Svg>
          </StatusButton>
          <StatusButton $w={15} aria-label="Snap">
            <Svg w={9} h={9}><path d="M0 1.500h9M0 4.500h9M0 7.500h9" stroke="#a9b0ba" strokeDasharray="1 3" /></Svg>
          </StatusButton>
          <StatusButton $w={9} aria-label="Snap settings"><Caret w={4} /></StatusButton>
          <StatusButton $w={14} aria-label="Ortho">
            <Svg w={10} h={9}><path d="M1.500 0v8H10M1.500 5h3v3" stroke="#a5acb7" /></Svg>
          </StatusButton>
          <StatusButton $w={16} aria-label="Polar">
            <Svg w={10} h={10}>
              <path d="M7.500 2A4 4 0 1 0 8 7.500M5 5L9 1M5 5h4" stroke="#a5acb7" />
            </Svg>
          </StatusButton>
          <StatusButton $w={8} aria-label="Polar settings"><Caret w={4} /></StatusButton>
          <StatusButton $w={15} aria-label="Isodraft">
            <Svg w={8} h={9}>
              <path d="M0 1l7 7M4 4L1 8" stroke="#8f9499" strokeWidth=".8" />
              <path d="M4.500 0v4" stroke="#7c9b54" />
            </Svg>
          </StatusButton>
          <StatusButton $w={8} aria-label="Isodraft settings"><Caret w={4} /></StatusButton>
          <StatusButton $w={14} $on aria-label="Object snap tracking">
            <Svg w={11} h={9}><path d="M10 .5L1.500 7.500H11M6 4v4" stroke="#dbe4ee" strokeWidth=".9" /></Svg>
          </StatusButton>
          <StatusButton $w={14} $on aria-label="Object snap">
            <Svg w={10} h={10}>
              <path d="M2.500 2.500h6v6h-6z" stroke="#b4cbe4" />
              <path d="M0 1h4M1.500 0v4" stroke="#dbe4ee" />
            </Svg>
          </StatusButton>
          <StatusButton $w={11} aria-label="Snap modes"><Caret w={4} /></StatusButton>
          <StatusButton $w={14} $on aria-label="Annotation visibility"><ScaleMark badge="eye" /></StatusButton>
          <StatusButton $w={14} aria-label="Auto scale"><ScaleMark badge="bolt" /></StatusButton>
          <StatusButton $w={13} aria-label="Annotation scale"><ScaleMark /></StatusButton>
          <StatusButton $w={12}>1:1</StatusButton>
          <StatusButton $w={9} aria-label="Scale list"><Caret w={4} /></StatusButton>
          <StatusButton $w={15} aria-label="Workspace"><Gear /></StatusButton>
          <StatusButton $w={9} aria-label="Workspace list"><Caret w={4} /></StatusButton>
          <StatusButton $w={5} aria-label="More"><Plus /></StatusButton>
        </StatusTools>
      </StatusBar>
    </Shell>
  );
}
